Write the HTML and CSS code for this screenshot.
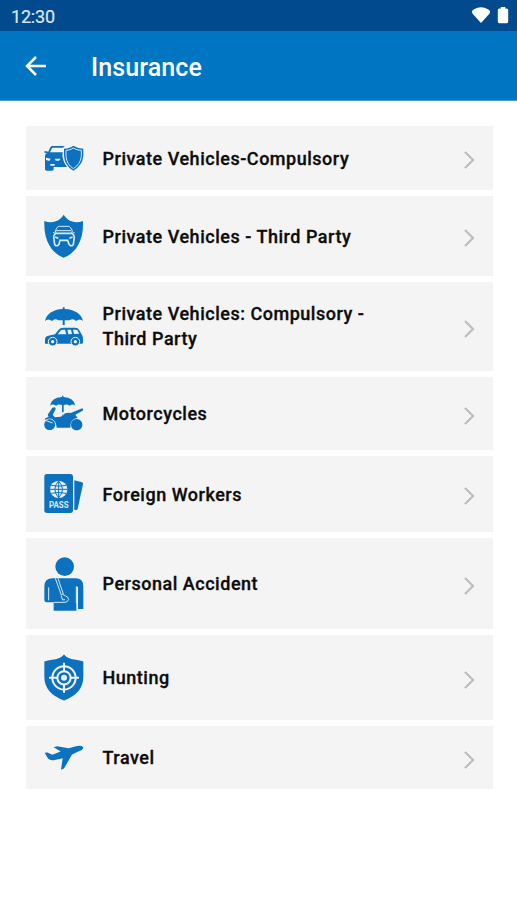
FILE: index.html
```html
<!DOCTYPE html>
<html lang="en">
<head>
<meta charset="utf-8">
<title>Insurance</title>
<link rel="stylesheet" href="styles.css">
</head>
<body>
<div class="status">
  <span class="time">12:30</span>
  <svg class="wifi" width="20" height="18" viewBox="0 0 20 18"><path d="M.8 4.6Q1 3.500 3 2.200Q10-1.600 17 2.200Q19 3.500 19.200 4.600L18.400 6.700L10 16L1.600 6.700Z"/></svg>
  <svg class="battery" width="12" height="18" viewBox="0 0 12 18"><path d="M3.700 0h4.600v1.600h1.500q1.400 0 1.400 1.700v11.300q0 1.700-1.400 1.700H2.200Q.8 16.300.8 14.600V3.300q0-1.700 1.400-1.700h1.500z"/></svg>
</div>
<header class="bar">
  <svg class="back" width="22" height="20" viewBox="0 0 22 20"><path d="M11 1L2 10l9 9M2 10h19"/></svg>
  <h1>Insurance</h1>
</header>
<main class="list">
  <a class="row">
    <svg class="icon" width="40" height="28" viewBox="72 72 120 84">
      <path d="M84 97L91 82Q93 78 98 78H134L129 83H99Q96 83 95 86L90 97H128L127 109L132 126L141 141H101V147Q101 152 96 152H80Q75 152 75 147V108Q75 101 81 99L73 98V94H82Z"/>
      <path class="cut" d="M78 113l14 3-4 7-10-3zM105 116h17l-5 6h-10zM91 132h13v5H91z"/>
      <path class="gap" d="M160 77Q150 85 132 86V108Q134 137 160 152Q187 137 190 108V86Q172 85 160 77Z"/>
      <path d="M160 77Q150 85 132 86V108Q134 137 160 152Q187 137 190 108V86Q172 85 160 77Z"/>
      <path class="line" d="M160 84Q151 91 138 91V109Q140 133 160 146Q181 133 184 109V91Q170 91 160 84Z"/>
    </svg>
    <span class="label">Private Vehicles-Compulsory</span>
    <svg class="chev" width="14" height="22" viewBox="0 0 14 22"><path d="M3 5l8 8-8 8"/></svg>
  </a>
  <a class="row">
    <svg class="icon" width="40" height="44" viewBox="72 57 120 132">
      <path d="M131 59Q141 75 155 79Q171 85 189 78Q191 121 174 151Q159 178 131 188Q103 178 88 151Q71 121 73 78Q91 85 107 79Q121 75 131 59Z"/>
      <path class="line" d="M108 115L106 107L112 97Q114 94 118 94H145Q149 94 151 97L157 107L155 115M108 107H154M107 116L99 112M156 116L164 112"/>
      <path class="line strong" d="M108 115Q101 119 101 126L104 148Q106 153 112 152L117 148L120 136H143L147 148L152 152Q158 153 160 148L163 126Q162 119 156 115ZM105 126L115 130M158 126L148 130"/>
    </svg>
    <span class="label">Private Vehicles - Third Party</span>
    <svg class="chev" width="14" height="22" viewBox="0 0 14 22"><path d="M3 5l8 8-8 8"/></svg>
  </a>
  <a class="row two-line">
    <svg class="icon" width="40" height="41" viewBox="72 63 120 123">
      <path d="M75 108C79 88 99 73 128 72V67H134V72C164 73 185 88 189 108Q180 99 168 108Q160 99 149 106H134V120H128V106H115Q104 99 96 108Q84 99 75 108Z"/>
      <path d="M75 176V164Q75 154 85 152L105 148L116 134Q120 128 130 128H166Q174 128 177 134L186 150Q190 154 189 174L186 176Z"/>
      <path class="cut" d="M113 148L121 137Q124 134 129 134H135L139 148ZM142 134H153L156 147L145 148ZM159 134H169Q172 134 173 137L178 146L162 147Z"/>
      <g class="wheel"><circle cx="98" cy="170" r="13"/><circle cx="166" cy="170" r="13"/></g>
      <g class="hub"><circle cx="98" cy="170" r="5"/><circle cx="166" cy="170" r="5"/></g>
    </svg>
    <span class="label">Private Vehicles: Compulsory -<br>Third Party</span>
    <svg class="chev" width="14" height="22" viewBox="0 0 14 22"><path d="M3 5l8 8-8 8"/></svg>
  </a>
  <a class="row">
    <svg class="icon" width="40" height="37" viewBox="72 60 120 111">
      <path d="M90 92Q94 68 126 66V62H130V66Q162 68 166 92Q157 85 149 92Q141 86 131 90V112H126V90Q116 86 108 92Q98 85 90 92Z"/>
      <path d="M104 97Q110 101 104 108L98 120L105 127L123 125Q134 111 152 114L187 100Q192 102 188 107L166 119L173 129Q154 131 151 158H110Q108 138 92 132L76 135Q72 131 78 129L86 125L83 119L97 98Z"/>
      <path class="line" d="M107 119Q119 108 130 120"/>
      <circle class="gap thin" cx="89" cy="149" r="17"/><circle cx="89" cy="149" r="16"/>
      <circle class="gap thin" cx="170" cy="149" r="17"/><circle cx="170" cy="149" r="17"/>
      <path class="line" d="M76 136L98 144"/>
    </svg>
    <span class="label">Motorcycles</span>
    <svg class="chev" width="14" height="22" viewBox="0 0 14 22"><path d="M3 5l8 8-8 8"/></svg>
  </a>
  <a class="row">
    <svg class="icon" width="40" height="42" viewBox="72 54 120 126">
      <path d="M163 76L186 82Q190 83 189 88L173 161Q172 166 167 165L161 163Q163 161 163 157Z"/>
      <rect x="73" y="57" width="86" height="117" rx="8"/>
      <circle class="cut" cx="116" cy="103" r="26"/>
      <path class="globe" d="M116 77V129M90 103H142M94 91Q116 96 138 91M94 115Q116 110 138 115M116 78Q93 103 116 128Q139 103 116 78"/>
      <text x="87" y="158" textLength="59" lengthAdjust="spacingAndGlyphs">PASS</text>
    </svg>
    <span class="label">Foreign Workers</span>
    <svg class="chev" width="14" height="22" viewBox="0 0 14 22"><path d="M3 5l8 8-8 8"/></svg>
  </a>
  <a class="row">
    <svg class="icon" width="40" height="55" viewBox="72 48 120 165">
      <circle cx="134" cy="80" r="28"/>
      <path d="M73 140Q73 115 98 115H167Q190 115 190 140V207H174V140H169V212H101V187H80Q73 187 73 180Z"/>
      <path class="line" d="M86 142V181M106 115L124 165M114 115L130 162M101 187H132Q141 189 146 179Q145 170 137 168L126 162M123 166L128 180L135 179M169 139V190"/>
    </svg>
    <span class="label">Personal Accident</span>
    <svg class="chev" width="14" height="22" viewBox="0 0 14 22"><path d="M3 5l8 8-8 8"/></svg>
  </a>
  <a class="row">
    <svg class="icon" width="40" height="48" viewBox="72 55.500 120 144">
      <path d="M132 57Q145 72 168 73Q180 75 190 78V124Q190 174 132 195Q73 174 73 124V78Q83 75 96 73Q119 72 132 57Z"/>
      <g class="sight"><circle cx="132" cy="127" r="35"/><circle cx="132" cy="127" r="20"/><path d="M132 82V109M132 145V172M87 127H114M150 127H177"/></g>
      <circle class="cut" cx="132" cy="127" r="9"/>
    </svg>
    <span class="label">Hunting</span>
    <svg class="chev" width="14" height="22" viewBox="0 0 14 22"><path d="M3 5l8 8-8 8"/></svg>
  </a>
  <a class="row">
    <svg class="icon" width="40" height="28" viewBox="72 70.500 120 84">
      <path d="M74 97L82 96L97 103L122 93L101 80L111 77L146 83L168 77Q184 74 190 80Q190 87 180 91L156 102L132 144L123 148L128 113L101 119Q90 121 84 114Z"/>
    </svg>
    <span class="label">Travel</span>
    <svg class="chev" width="14" height="22" viewBox="0 0 14 22"><path d="M3 5l8 8-8 8"/></svg>
  </a>
</main>
</body>
</html>
```
FILE: styles.css
```css
* { box-sizing: border-box; }
body { margin: 0; min-height: 900px; background: #fff; font-family: Roboto, sans-serif; }
.status { display: flex; align-items: flex-start; height: 31px; padding: 7px 8px 0 11px; background: #004a8d; color: #dce8f5; }
.time { flex: 1; font-size: 18px; line-height: 20px; letter-spacing: -0.2px; -webkit-text-stroke: 0.2px; }
.status svg { fill: #fff; }
.battery { margin-left: 6px; }
.bar { display: flex; align-items: center; height: 70px; padding: 1px 25px 0; background: #0076c2; color: #fff; border-bottom: 1px solid #4a9dd3; }
.back { fill: none; stroke: #fff; stroke-width: 2.500; }
h1 { margin: 4px 0 0 44px; font-size: 25px; line-height: 30px; font-weight: 500; letter-spacing: 0.1px; }
.list { display: grid; grid-template-rows: 64px 80px 89px 73px 76px 91px 85px 63px; gap: 6px; padding: 25px 24px 0 26px; }
.row { display: flex; align-items: center; padding: 0 17px 0 18px; background: #f4f4f4; }
.icon { flex: none; fill: #0c72bf; }
.label { flex: 1; margin-left: 18.500px; font-size: 18px; line-height: 25px; font-weight: 500; letter-spacing: 0.52px; color: #0c0c0c; -webkit-text-stroke: 0.3px; }
.two-line .label { padding-bottom: 2px; }
.chev { flex: none; fill: none; stroke: #bdbdbd; stroke-width: 2.200; }
.cut { fill: #e8f0f7; }
.gap { stroke: #f4f4f4; stroke-width: 6; }
.thin { stroke-width: 3; }
.line { fill: none; stroke: #d9e9f5; stroke-width: 3; }
.strong { stroke-width: 5; }
.wheel { stroke: #f4f4f4; stroke-width: 3; }
.hub { fill: #f4f4f4; }
.globe { fill: none; stroke: #0c72bf; stroke-width: 3; }
.icon text { fill: #d9e9f5; font-size: 27px; font-weight: 700; }
.sight { fill: none; stroke: #f4f4f4; stroke-width: 6; }
```
